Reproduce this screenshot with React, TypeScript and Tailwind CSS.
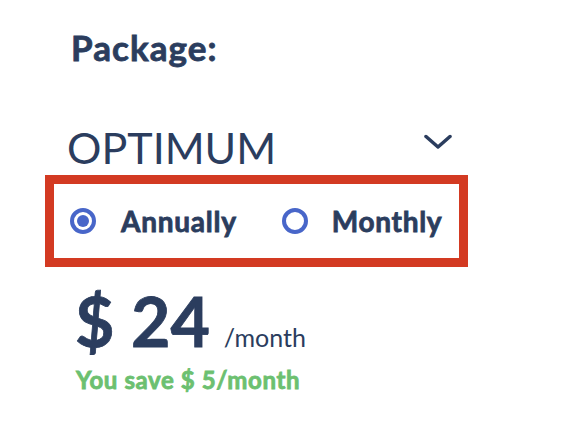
function Chevron() {
  return (
    <svg width="28" height="16" viewBox="0 0 28 16" fill="none">
      <path d="M2 2.5 L14 13 L26 2.5" stroke="#2b3d5e" strokeWidth="3.5" strokeLinecap="round" strokeLinejoin="round" />
    </svg>
  );
}

function Radio({ checked }: { checked: boolean }) {
  return (
    <span className="flex h-[26px] w-[26px] shrink-0 items-center justify-center rounded-full border-[4px] border-[#4866c9]">
      {checked && <span className="h-[12px] w-[12px] rounded-full bg-[#4866c9]" />}
    </span>
  );
}

const heavy = "font-bold [-webkit-text-stroke:0.8px_currentColor]";

export default function App() {
  return (
    <div className="h-[437px] w-[576px] bg-white font-['Lato','Noto_Sans',sans-serif] text-[#2b3d5e]">
      <div className="pl-[45px] pt-[30px]">
        <div className={`pl-[26px] text-[35px] leading-none tracking-[0.03em] ${heavy}`}>Package:</div>

        <div className="mt-[61px] flex w-[410px] items-center justify-between pl-[22px]">
          <span className="text-[43px] font-normal leading-none">OPTIMUM</span>
          <span className="-mt-[12px] mr-[3px]">
            <Chevron />
          </span>
        </div>

        <div className="mt-[6px] flex h-[92px] w-[423px] items-center border-[9px] border-[#d33a22] pl-[16px]">
          <div className="flex items-center gap-[25px]">
            <Radio checked />
            <span className={`text-[28px] leading-none tracking-[0.027em] ${heavy}`}>Annually</span>
          </div>
          <div className="ml-[45px] flex items-center gap-[24px]">
            <Radio checked={false} />
            <span className={`text-[28px] leading-none tracking-[0.025em] ${heavy}`}>Monthly</span>
          </div>
        </div>

        <div className="mt-[20px] flex items-baseline pl-[30px]">
          <span className={`text-[68px] leading-none ${heavy}`}>$ 24</span>
          <span className="ml-[14px] text-[25px] font-normal leading-none">/month</span>
        </div>
        <div className={`mt-[13px] pl-[31px] text-[24px] leading-none tracking-[0.025em] text-[#6cc070] ${heavy}`}>
          You save $ 5/month
        </div>
      </div>
    </div>
  );
}
